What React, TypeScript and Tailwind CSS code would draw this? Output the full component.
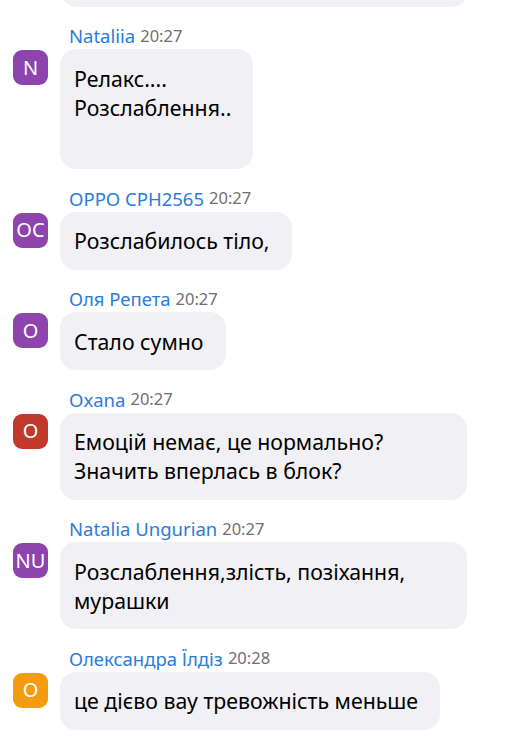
type Msg = {
  name: string;
  time: string;
  initials: string;
  color: string;
  text: string;
  tall?: boolean;
};

const messages: Msg[] = [
  { name: "Nataliia", time: "20:27", initials: "N", color: "bg-[#8e44ad]", text: "Релакс....\nРозслаблення..", tall: true },
  { name: "OPPO CPH2565", time: "20:27", initials: "OC", color: "bg-[#8e44ad]", text: "Розслабилось тіло," },
  { name: "Оля Репета", time: "20:27", initials: "O", color: "bg-[#8e44ad]", text: "Стало сумно" },
  { name: "Oxana", time: "20:27", initials: "O", color: "bg-[#c0392b]", text: "Емоцій немає, це нормально? Значить вперлась в блок?" },
  { name: "Natalia Ungurian", time: "20:27", initials: "NU", color: "bg-[#8e44ad]", text: "Розслаблення,злість, позіхання, мурашки" },
  { name: "Олександра Їлдіз", time: "20:28", initials: "O", color: "bg-[#f39c12]", text: "це дієво вау тревожність меньше" },
  { name: "Світлана", time: "20:28", initials: "С", color: "bg-[#16a085]", text: "Так" },
];

function Message({ m }: { m: Msg }) {
  return (
    <div className="mt-[18.5px] flex gap-[12px] pl-[13px]">
      <div className="w-[35px] shrink-0 pt-[25px]">
        <div
          className={`${m.color} flex h-[35px] w-[35px] items-center justify-center rounded-[9px] text-[20px] leading-none text-white`}
        >
          {m.initials}
        </div>
      </div>
      <div className="min-w-0">
        <div className="mb-[2px] flex h-[22px] items-center gap-[5px] pl-[9px]">
          <span className="text-[18.5px] text-[#2b7bdc]">{m.name}</span>
          <span className="text-[16.5px] text-[#6f6f73]">{m.time}</span>
        </div>
        <div
          className={`${m.tall ? "h-[120px]" : ""} w-fit max-w-[407px] whitespace-pre-line rounded-2xl bg-[#f1f1f5] py-[14.5px] pl-[14px] pr-[22px] text-[21.3px] leading-[29px] text-black`}
        >
          {m.text}
        </div>
      </div>
    </div>
  );
}

export default function App() {
  return (
    <div
      className="h-[749px] w-[518px] overflow-hidden bg-white"
      style={{ fontFamily: '"Noto Sans", "Open Sans", sans-serif' }}
    >
      <div className="ml-[61px] -mt-[40px] h-[47px] w-[407px] rounded-2xl bg-[#f1f1f5]" />
      <div className="-mt-[0.5px]">
        {messages.map((m, i) => (
          <Message key={i} m={m} />
        ))}
      </div>
    </div>
  );
}
